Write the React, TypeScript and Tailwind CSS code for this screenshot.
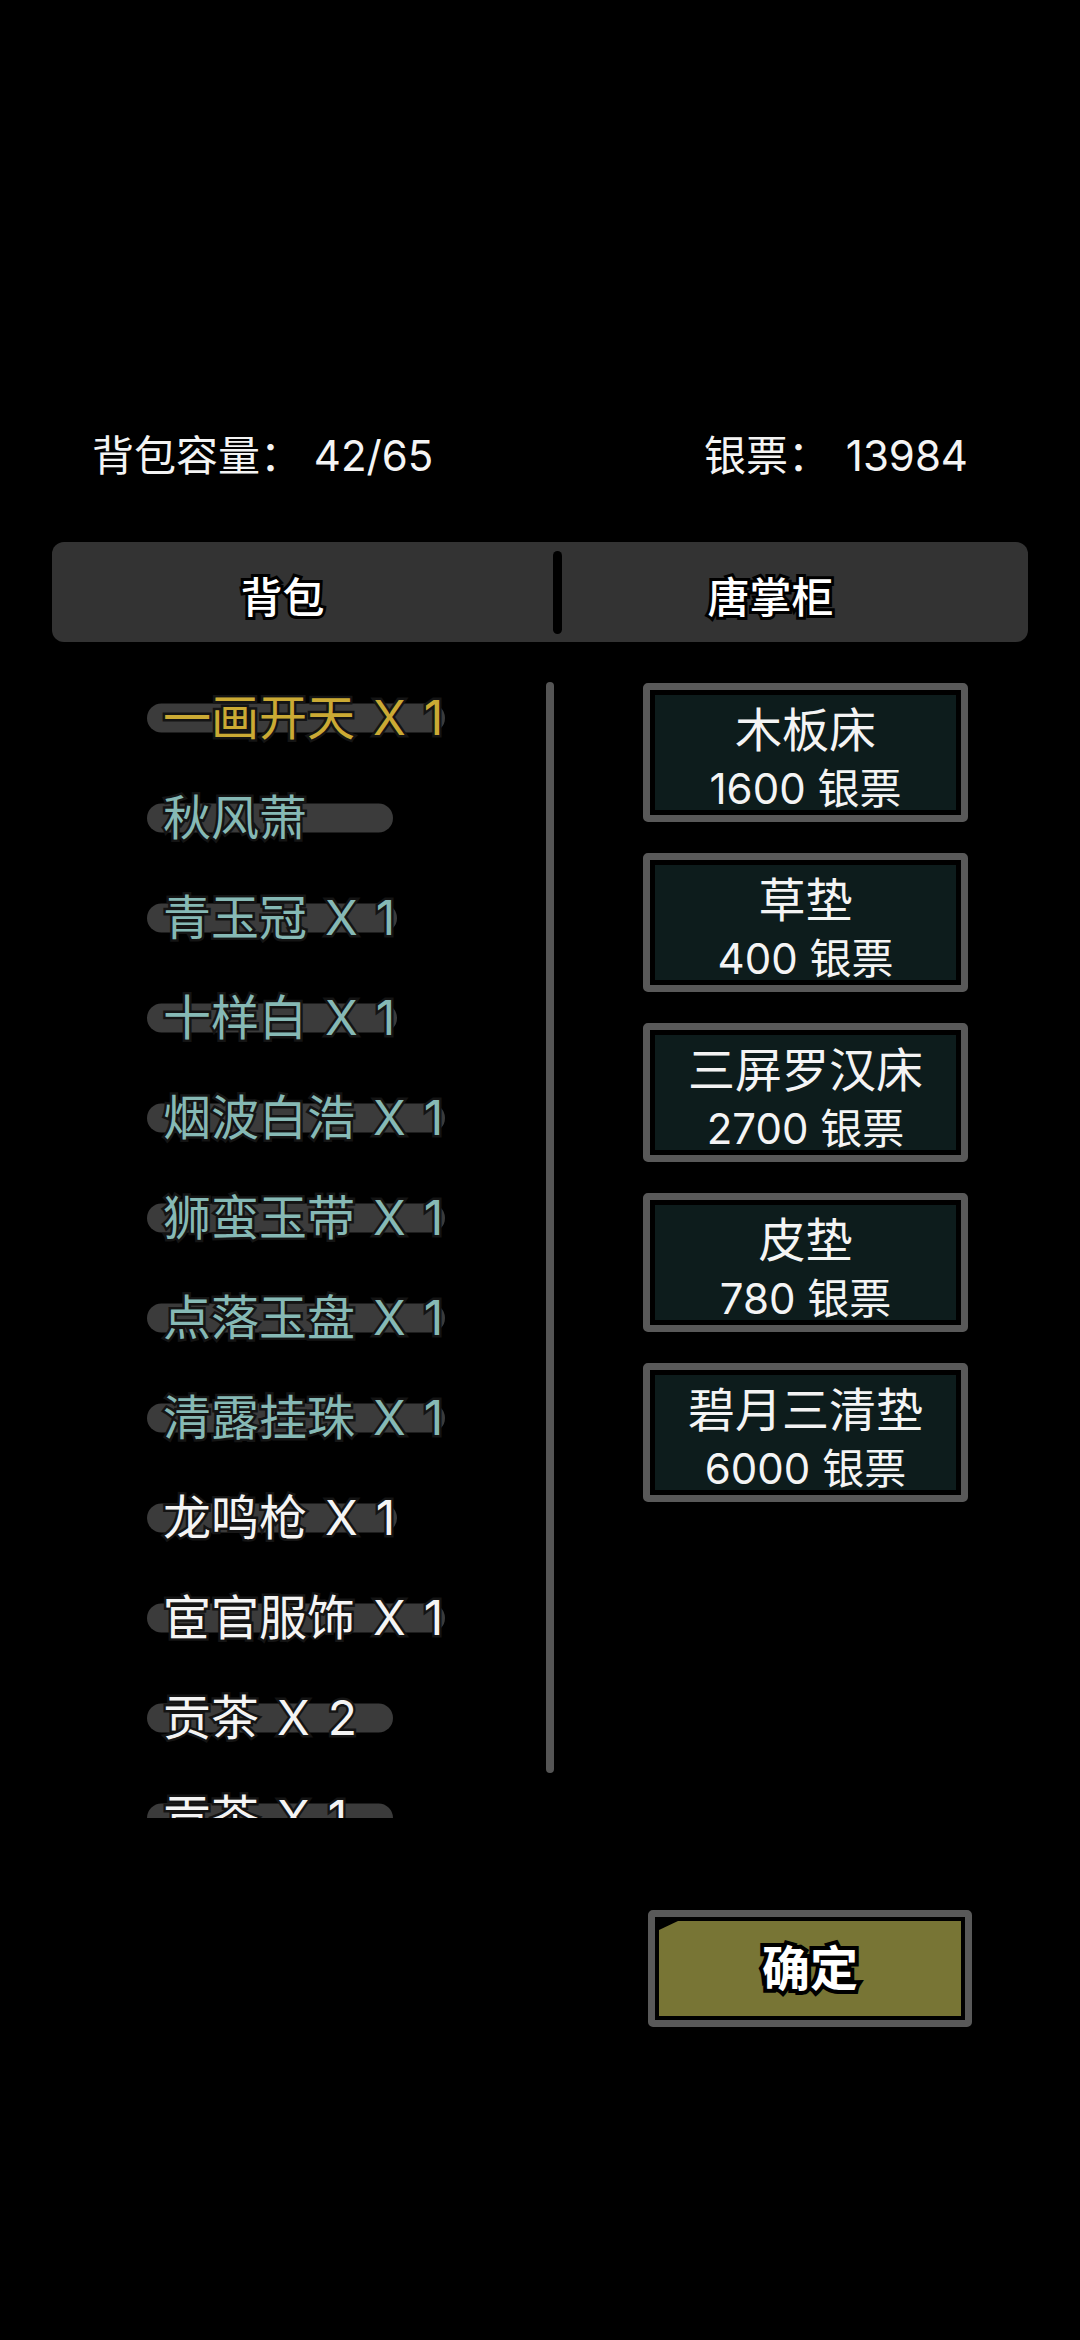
import React from "react";

const FONT = { fontFamily: 'Inter,"Noto Sans CJK SC",sans-serif' };

type Item = { name: string; color: "gold" | "teal" | "white" };

const items: Item[] = [
  { name: "一画开天 X 1", color: "gold" },
  { name: "秋风萧", color: "teal" },
  { name: "青玉冠 X 1", color: "teal" },
  { name: "十样白 X 1", color: "teal" },
  { name: "烟波白浩 X 1", color: "teal" },
  { name: "狮蛮玉带 X 1", color: "teal" },
  { name: "点落玉盘 X 1", color: "teal" },
  { name: "清露挂珠 X 1", color: "teal" },
  { name: "龙鸣枪 X 1", color: "white" },
  { name: "宦官服饰 X 1", color: "white" },
  { name: "贡茶 X 2", color: "white" },
  { name: "贡茶 X 1", color: "white" },
];

const shop = [
  { name: "木板床", price: 1600 },
  { name: "草垫", price: 400 },
  { name: "三屏罗汉床", price: 2700 },
  { name: "皮垫", price: 780 },
  { name: "碧月三清垫", price: 6000 },
];

function colorClass(c: Item["color"]) {
  if (c === "gold") return "text-[#cbaa34]";
  if (c === "teal") return "text-[#86b9b5]";
  return "text-[#f4f4f4]";
}

export default function App() {
  return (
    <div className="w-[1080px] h-[2340px] bg-black overflow-hidden" style={FONT}>
      {/* header */}
      <div className="pt-[426px] pl-[92px] pr-[112px] h-[486px] flex items-center justify-between text-[42px] leading-[60px] text-[#f4f4f4]">
        <div className="h-[60px]">背包容量： 42/65</div>
        <div className="h-[60px] [word-spacing:4px]">银票： 13984</div>
      </div>

      {/* tabs */}
      <div className="mt-[56px] mx-[52px] h-[100px] rounded-[12px] bg-[#333333] flex items-center">
        <div className="w-[501px] pr-[40px] pt-[10px] flex justify-center text-[42px] font-medium text-white [-webkit-text-stroke:6px_#000] [paint-order:stroke_fill]">
          背包
        </div>
        <div className="w-[9px] h-[83px] rounded-full bg-black"></div>
        <div className="flex-1 pr-[49px] pt-[10px] flex justify-center text-[42px] font-medium text-white [-webkit-text-stroke:6px_#000] [paint-order:stroke_fill]">
          唐掌柜
        </div>
      </div>

      {/* content */}
      <div className="mt-[26px] flex h-[1150px]">
        <div className="w-[546px] shrink-0 h-[1150px] [clip-path:inset(0_-100px_0_0)] pl-[147px]">
          {items.map((it, i) => (
            <div key={i} className="h-[100px] flex items-center">
              <div className="relative flex items-center min-w-[246px] pr-[2px]">
                <div className="absolute left-0 right-0 top-1/2 -translate-y-1/2 h-[29px] rounded-full bg-[#3b3b3b]"></div>
                <div
                  className={`relative pl-[16px] flex gap-[18px] text-[48px] leading-[60px] whitespace-nowrap ${colorClass(
                    it.color
                  )} [-webkit-text-stroke:5px_#141414] [paint-order:stroke_fill]`}
                >
                  {it.name.split(" ").map((t, j) => (
                    <span key={j} className="shrink-0">{t}</span>
                  ))}
                </div>
              </div>
            </div>
          ))}
        </div>
        <div className="w-[8px] shrink-0 mt-[14px] h-[1091px] rounded-full bg-[#555555]"></div>
        <div className="ml-[89px] pt-[15px] flex flex-col gap-[31px]">
          {shop.map((s, i) => (
            <div
              key={i}
              className="w-[325px] h-[139px] border-[7px] border-[#595959] rounded-[5px] bg-black p-[5px]"
            >
              <div className="h-full bg-[#0d1c1c] flex flex-col items-center pt-[9px] text-[#f4f4f4]">
                <div className="h-[52px] leading-[52px] text-[47px]">{s.name}</div>
                <div className="mt-[7px] h-[52px] leading-[52px] text-[42px]">{s.price} 银票</div>
              </div>
            </div>
          ))}
        </div>
      </div>

      {/* confirm */}
      <div className="mt-[92px] ml-[648px] w-[324px] h-[117px] border-[7px] border-[#595959] rounded-[5px] bg-black p-[4px]">
        <div className="h-full bg-[#787535] [clip-path:polygon(19px_0,100%_0,100%_100%,0_100%,0_9px)] flex items-center justify-center">
          <span className="text-[48px] font-bold leading-none text-white [-webkit-text-stroke:8px_#000] [paint-order:stroke_fill]">
            确定
          </span>
        </div>
      </div>
    </div>
  );
}
